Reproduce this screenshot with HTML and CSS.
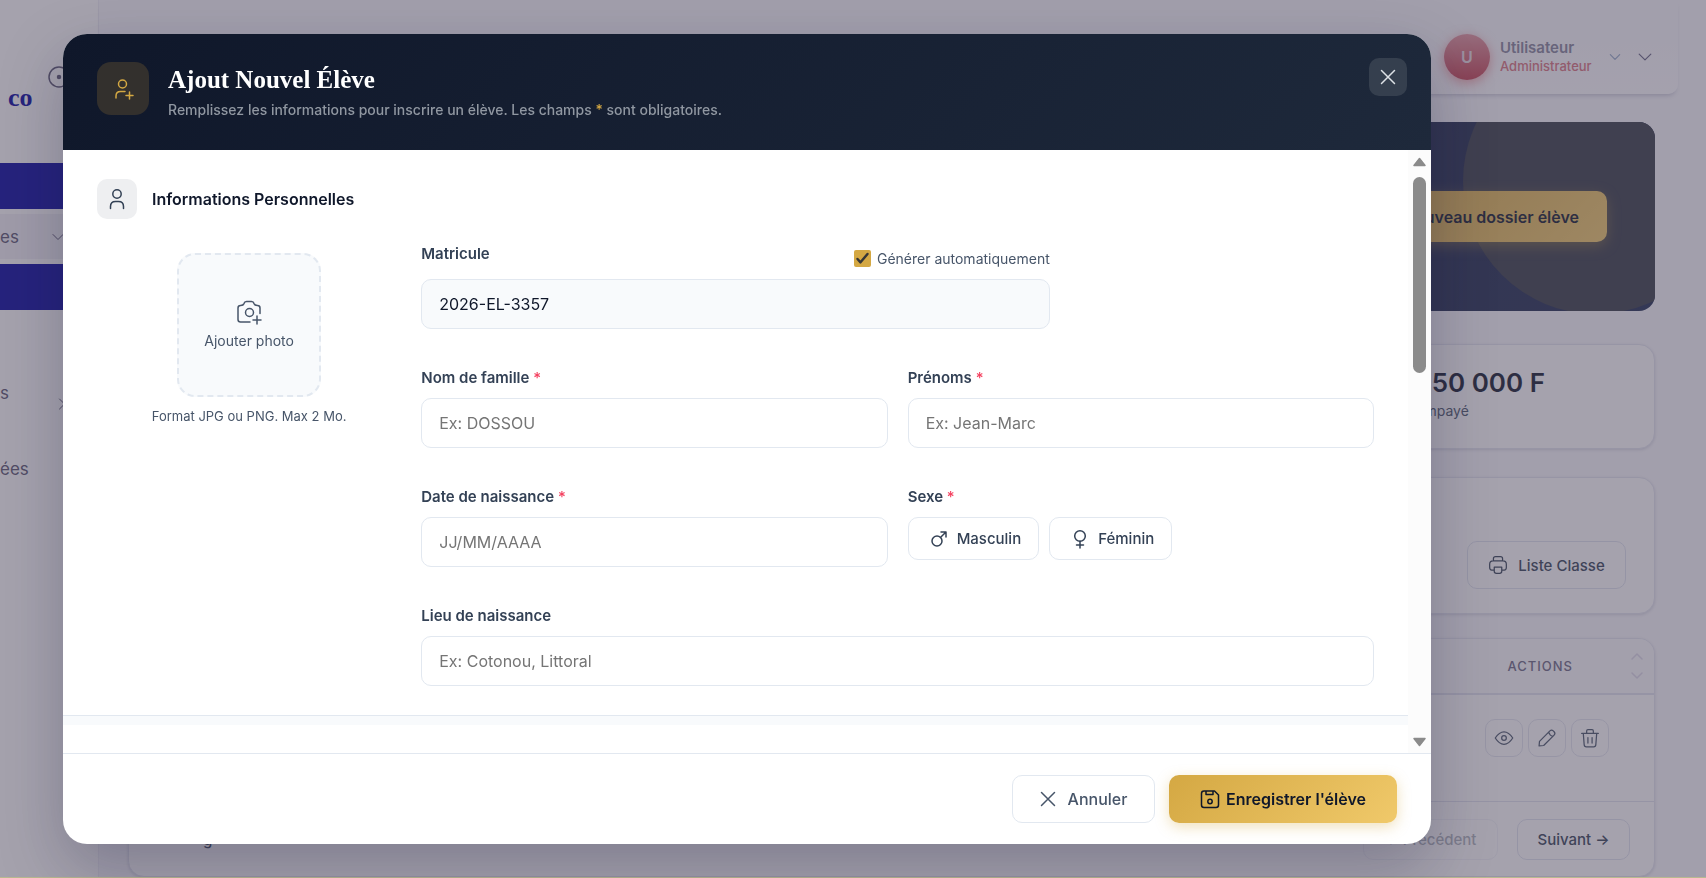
FILE: index.html
```html
<!DOCTYPE html>
<html lang="fr">
<head>
<meta charset="utf-8">
<title>Ajout Nouvel Élève</title>
<link rel="stylesheet" href="styles.css">
</head>
<body>
<div class="app">
  <nav class="sidebar">
    <div class="brand"><span class="brand-name">co</span>
      <svg class="pin" viewBox="0 0 24 24"><circle cx="12" cy="12" r="10"/><circle cx="12" cy="12" r="1.5" class="dot"/></svg>
    </div>
    <div class="nav-bar"></div>
    <div class="nav-item open"><span>es</span><svg class="ico12" viewBox="0 0 12 12"><path d="M1 3.500l5 5 5-5"/></svg></div>
    <div class="nav-bar"></div>
    <div class="nav-group"><span>s</span><svg class="ico12" viewBox="0 0 12 12"><path d="M3.500 1l5 5-5 5"/></svg></div>
    <div class="nav-group"><span>ées</span></div>
  </nav>
  <main class="main">
    <header class="topbar">
      <div class="avatar">U</div>
      <div class="user"><strong>Utilisateur</strong><span>Administrateur</span></div>
      <svg class="chev small" viewBox="0 0 12 12"><path d="M2 4l4 4 4-4"/></svg>
      <svg class="chev" viewBox="0 0 12 12"><path d="M1 3.500l5 5 5-5"/></svg>
    </header>
    <div class="content">
      <section class="banner"><button class="gold" type="button">Nouveau dossier élève</button></section>
      <section class="card stat"><div class="stat-text"><strong>150 000 F</strong><span>Impayé</span></div></section>
      <section class="card tools">
        <button class="outline" type="button">
          <svg class="ico20" viewBox="0 0 24 24"><path d="M6.500 7V4.500Q6.500 2 9 2h6q2.500 0 2.500 2.500V7M6.500 18H4.500Q2 18 2 15v-4q0-4 4-4h12q4 0 4 4v4q0 3-2.500 3h-2M7.500 14.500h9v5Q16.500 22 14 22h-4q-2.500 0-2.500-2.500z"/></svg>Liste Classe</button>
      </section>
      <section class="card table">
        <div class="thead"><span>ACTIONS</span>
          <svg class="sort" viewBox="0 0 14 30"><path d="M2 8l5-5 5 5M2 22l5 5 5-5"/></svg></div>
        <div class="trow">
          <button type="button" aria-label="Voir"><svg class="ico20" viewBox="0 0 24 24"><path d="M1.500 12C5 6.500 8.500 4.500 12 4.500s7 2 10.500 7.500c-3.500 5.500-7 7.500-10.500 7.500S5 17.500 1.500 12z"/><circle cx="12" cy="12" r="2.800"/></svg></button>
          <button type="button" aria-label="Modifier"><svg class="ico20" viewBox="0 0 24 24"><path d="M3 16L15.500 3.500q2-2 4 0l1 1q2 2 0 4L8 21l-5.500.5zM14 5q1.500 4.500 5 5"/></svg></button>
          <button type="button" aria-label="Supprimer"><svg class="ico20" viewBox="0 0 24 24"><path d="M2 6.500h20M8 6V3.500Q8 2 9.500 2h5Q16 2 16 3.500V6M4 7l1 13q.2 2.500 2.500 2.500h9q2.300 0 2.500-2.500l1-13M9.500 11.500v6.500M14.500 11.500v6.500"/></svg></button>
        </div>
        <div class="pager"><span class="page-info">g</span>
          <button class="prev" type="button" disabled>← Précédent</button>
          <button type="button">Suivant →</button></div>
      </section>
    </div>
  </main>
</div>

<div class="overlay">
  <form class="dialog" role="dialog" aria-labelledby="dlg-title">
    <header class="dlg-head">
      <div class="head-icon"><svg class="ico24" viewBox="0 0 24 24"><circle cx="11.500" cy="7" r="4"/><path d="M5 21v-2q0-4.500 4.500-4.500h4.500M15 18.500h7M18.500 15v7"/></svg></div>
      <div class="head-text">
        <h1 id="dlg-title">Ajout Nouvel Élève</h1>
        <p>Remplissez les informations pour inscrire un élève. Les champs <b>*</b> sont obligatoires.</p>
      </div>
      <button class="close" type="button" aria-label="Fermer"><svg class="ico16" viewBox="0 0 16 16"><path d="M1.500 1.500l13 13M14.500 1.500l-13 13"/></svg></button>
    </header>
    <div class="dlg-body">
      <div class="scroll">
        <section class="section">
          <div class="section-title">
            <span class="section-icon"><svg class="ico24" viewBox="0 0 24 24"><circle cx="12" cy="7" r="4.200"/><path d="M5.500 21.500v-2q0-5 5-5h3q5 0 5 5v2"/></svg></span>
            <h2>Informations Personnelles</h2>
          </div>
          <div class="columns">
            <div class="photo">
              <button class="photo-box" type="button">
                <svg class="ico28" viewBox="0 0 28 28"><path d="M15 24H5.500Q3 24 3 21.500V10Q3 7.500 5.500 7.500C8 7.500 8.500 7 9 5.500Q9.500 3.500 11.500 3.500h5q2 0 2.500 2c.5 1.500 1 2 3.500 2Q25 7.500 25 10v5.500M22 18v8M18 22h8"/><circle cx="14.500" cy="14.500" r="4"/></svg>
                Ajouter photo</button>
              <small>Format JPG ou PNG. Max 2 Mo.</small>
            </div>
            <div class="fields">
              <div class="field wide">
                <div class="label-row"><label for="mat">Matricule</label>
                  <label class="auto"><input type="checkbox" checked><span class="tick"><svg viewBox="0 0 17 17"><path d="M3.500 9l3 3.300 7-8.300"/></svg></span>Générer automatiquement</label></div>
                <input id="mat" type="text" value="2026-EL-3357" readonly>
              </div>
              <div class="field half"><label for="nom">Nom de famille <b>*</b></label><input id="nom" type="text" placeholder="Ex: DOSSOU"></div>
              <div class="field half"><label for="pre">Prénoms <b>*</b></label><input id="pre" type="text" placeholder="Ex: Jean-Marc"></div>
              <div class="field half"><label for="dob">Date de naissance <b>*</b></label><input id="dob" type="text" placeholder="JJ/MM/AAAA"></div>
              <div class="field half"><span class="label" id="sexe">Sexe <b>*</b></span>
                <div class="choices" role="group" aria-labelledby="sexe">
                  <button type="button"><svg class="ico20" viewBox="0 0 20 20"><circle cx="8" cy="12" r="5"/><path d="M11.700 8.300L17 3M12 3h5v5"/></svg>Masculin</button>
                  <button type="button"><svg class="ico20" viewBox="0 0 20 20"><circle cx="10" cy="7" r="5.300"/><path d="M10 12.300V19M6.500 16h7"/></svg>Féminin</button>
                </div></div>
              <div class="field full"><label for="lieu">Lieu de naissance</label><input id="lieu" type="text" placeholder="Ex: Cotonou, Littoral"></div>
            </div>
          </div>
        </section>
        <div class="band"></div>
      </div>
      <div class="scrollbar" aria-hidden="true">
        <svg viewBox="0 0 15 11"><path d="M7.500 2L13 9H2z"/></svg>
        <div class="track"><div class="thumb"></div></div>
        <svg viewBox="0 0 15 11"><path d="M7.500 9L2 2h11z"/></svg>
      </div>
    </div>
    <footer class="dlg-foot">
      <button class="cancel" type="button"><svg class="ico16" viewBox="0 0 16 16"><path d="M1.500 1.500l13 13M14.500 1.500l-13 13"/></svg>Annuler</button>
      <button class="gold save" type="submit"><svg class="ico20" viewBox="0 0 20 20"><path d="M4 2h10.500L18.500 6v10q0 2.500-2.500 2.500H4Q1.500 18.500 1.500 16V4.500Q1.500 2 4 2zM6 2v3.500h7V2"/><circle cx="10" cy="12.500" r="2.200"/></svg>Enregistrer l'élève</button>
    </footer>
  </form>
</div>
</body>
</html>
```
FILE: styles.css
```css
* { box-sizing: border-box; }
body, h1, h2, p { margin: 0; }
body { font-family: Inter, "Open Sans", sans-serif; color: #0f172a; }
button, input { font: inherit; color: inherit; }
button { display: flex; align-items: center; justify-content: center; padding: 0; border: 0; background: none; white-space: nowrap; }
svg { flex: none; fill: none; stroke: currentColor; stroke-width: 1.5; stroke-linecap: round; stroke-linejoin: round; }
.ico12 { width: 12px; height: 12px; stroke-width: 1; }
.ico16 { width: 16px; height: 16px; }
.ico20 { width: 20px; height: 20px; }
.ico24 { width: 24px; height: 24px; }
.ico28 { width: 28px; height: 28px; }

/* Page behind the dialog */
.app { display: flex; height: 100vh; overflow: hidden; background: #f8f8fc; }
.sidebar { flex: none; width: 99px; padding-top: 64px; background: #fff; color: #57536f; font-size: 17px; border-right: 1px solid #efeff6; }
.brand { display: flex; justify-content: space-between; height: 99px; padding: 0 27px 0 8px; color: #00009e; }
.brand-name { padding-top: 20px; font: bold 26px/28px "Liberation Serif", serif; }
.pin { width: 24px; height: 26px; color: #57536f; }
.pin .dot { fill: currentColor; }
.nav-bar { height: 46px; background: #00009e; }
.nav-item, .nav-group { display: flex; align-items: center; justify-content: space-between; padding-right: 34px; }
.nav-item { height: 45px; margin: 5px 0; background: #f2f1f6; }
.nav-group { height: 77px; margin-bottom: -1px; padding-right: 30px; }
.nav-group svg { margin-top: 22px; }
.nav-bar + .nav-group { margin-top: 44px; }
.main { flex: 1; min-width: 0; }
.topbar { display: flex; align-items: center; justify-content: flex-end; height: 94px; margin-right: 28px; padding: 19px 26px 0 0; border-radius: 0 0 10px 10px; background: linear-gradient(#f8f8fc 30%, #fdfcff); box-shadow: 0 4px 5px -3px rgba(20, 20, 70, .25); color: #9694a8; }
.avatar { display: grid; place-items: center; width: 46px; height: 46px; margin-right: 10px; border-radius: 50%; background: linear-gradient(#e2949f, #c63f50); box-shadow: 0 3px 12px rgba(230, 70, 80, .5); color: #e8dbe2; font-weight: 600; }
.user { display: grid; width: 96px; font-size: 15px; line-height: 18px; color: #84839a; }
.user strong { font-weight: 600; }
.user span { font-size: 13px; font-weight: 500; color: #d9707c; }
.chev { width: 14px; height: 14px; stroke-width: 1; margin-left: 16px; color: #626080; }
.chev.small { margin-left: 12px; color: #93a8c8; }
.content { display: grid; gap: 28px; padding: 28px 51px 0 29px; }
.banner { position: relative; overflow: hidden; display: flex; align-items: center; justify-content: flex-end; height: 189px; padding-right: 48px; border-radius: 16px; background: linear-gradient(135deg, #0f172a, #1d2a50); margin-bottom: 5px; }
.banner::before { content: ""; position: absolute; top: -74px; right: -74px; width: 266px; height: 266px; border-radius: 50%; background: #343a45; }
.gold { height: 48px; padding: 0 28px; border-radius: 10px; background: linear-gradient(135deg, #d4a843, #f0c96a); box-shadow: 0 4px 14px rgba(212, 168, 67, .35); font-size: 16px; font-weight: 600; }
.banner .gold { position: relative; height: 51px; }
.card { border: 1px solid #e3e5ef; border-radius: 16px; background: #fff; box-shadow: 0 1px 3px rgba(15, 23, 72, .14); }
.stat { display: flex; justify-content: flex-end; height: 105px; padding: 21px 109px 0 0; }
.stat-text { display: grid; align-content: start; color: #475569; font-size: 14px; line-height: 22px; }
.stat strong { color: #0f172a; font-size: 26px; line-height: 34px; font-weight: 600; }
.tools { display: flex; align-items: flex-end; justify-content: flex-end; height: 137px; padding: 0 28px 24px; }
.outline { gap: 10px; width: 159px; height: 48px; border: 1px solid #dfe3ee; border-radius: 10px; color: #334155; font-size: 15px; font-weight: 500; }
.table { overflow: hidden; margin-top: -4px; }
.thead { display: flex; align-items: center; justify-content: flex-end; gap: 57px; height: 56px; padding-right: 10px; background: #fafafd; border-bottom: 2px solid #e0e2ee; color: #6a6682; font-size: 13px; font-weight: 500; letter-spacing: 1px; }
.sort { width: 14px; height: 30px; color: #ddd9e8; }
.trow { display: flex; justify-content: flex-end; gap: 5px; height: 107px; padding: 24px 45px 0; border-bottom: 1px solid #e0e2ee; color: #475569; }
.trow button { width: 38px; height: 38px; border: 1px solid #e3e5ef; border-radius: 10px; }
.pager { display: flex; align-items: center; gap: 19px; height: 74px; padding: 0 24px 0 74px; color: #334155; font-size: 15px; font-weight: 500; }
.page-info { margin-right: auto; }
.pager button { width: 113px; height: 41px; border: 1px solid #dfe3ee; border-radius: 10px; }
.pager .prev { width: 135px; opacity: .4; }

/* Dialog */
.overlay { position: fixed; inset: 0; padding: 34px 275px 33px 63px; background: rgba(75, 70, 91, .5); border-bottom: 1px solid #b9b98f; }
.dialog { display: flex; flex-direction: column; height: 100%; overflow: hidden; border-radius: 24px; background: #fff; box-shadow: 0 24px 64px rgba(15, 15, 50, .25); }
.dlg-head { display: flex; padding: 28px 24px 27px 34px; background: linear-gradient(135deg, #0f172a, #1e293b); color: #fff; }
.head-icon { display: grid; place-items: center; width: 52px; height: 53px; border-radius: 14px; background: #33302d; color: #d4a843; }
.head-text { flex: 1; padding-left: 19px; }
.head-text h1 { font: bold 25px/35px "Liberation Serif", serif; }
.head-text p { font-size: 14px; line-height: 26px; font-weight: 500; color: #9097a1; }
.head-text b { color: #d4a843; font-weight: 500; }
.close { width: 38px; height: 38px; margin-top: -4px; border-radius: 10px; background: #353f4e; color: #dde1e6; }
.dlg-body { display: flex; flex: 1; min-height: 0; }
.scroll { flex: 1; overflow: hidden; }
.section { padding: 29px 34px; border-bottom: 1px solid #e2e8f0; }
.section-title { display: flex; align-items: center; gap: 15px; margin-bottom: 24px; }
.section-title h2 { font-size: 16px; font-weight: 600; }
.section-icon { display: grid; place-items: center; width: 40px; height: 40px; border-radius: 10px; background: #eeeff1; color: #334155; }
.columns { display: grid; grid-template-columns: repeat(4, 1fr); gap: 20px; }
.photo { display: flex; flex-direction: column; align-items: center; gap: 9px; padding-top: 10px; color: #475569; }
.photo-box { flex-direction: column; gap: 6px; width: 144px; height: 144px; padding-bottom: 4px; border: 2px dashed #e2e8f0; border-radius: 18px; background: #f8fafc; font-size: 14px; }
.photo small { font-size: 13px; line-height: 20px; }
.fields { grid-column: span 3; display: grid; grid-template-columns: repeat(6, 1fr); gap: 38px 20px; }
.field { display: flex; flex-direction: column; gap: 10px; }
.wide { grid-column: span 4; }
.half { grid-column: span 3; }
.full { grid-column: span 6; }
.field label, .label { font-size: 15px; line-height: 21px; font-weight: 600; color: #334155; }
.field b { color: #f43f5e; font-weight: 500; }
.label-row { display: flex; justify-content: space-between; height: 26px; }
.field .auto { display: flex; align-items: center; gap: 6px; padding-top: 5px; font-size: 14px; font-weight: 400; color: #475569; }
.auto input { position: absolute; opacity: 0; }
.tick { display: block; width: 17px; height: 17px; border-radius: 2px; background: #d4a843; }
.tick svg { display: block; stroke: #363636; stroke-width: 2.5; }
.field input[type="text"] { width: 100%; height: 50px; padding: 0 17px; border: 1px solid #e2e8f0; border-radius: 10px; background: #fff; font-size: 16px; outline: 0; }
.field input[readonly] { background: #f8fafc; }
.field input::placeholder { color: #757575; opacity: 1; }
.choices { display: flex; gap: 10px; }
.choices button { gap: 8px; height: 43px; padding: 0 17px 0 20px; border: 1px solid #e2e8f0; border-radius: 10px; font-size: 15px; font-weight: 500; color: #334155; }
.band { height: 9px; background: #f8fafc; }
.scrollbar { display: flex; flex-direction: column; align-items: center; width: 23px; padding: 6px 0 5px; background: #fcfcfc; }
.scrollbar svg { width: 15px; height: 12px; fill: #8b8b8b; stroke: #8b8b8b; }
.track { flex: 1; padding: 9px 0; }
.thumb { width: 13px; height: 196px; border-radius: 7px; background: #8b8b8b; }
.dlg-foot { display: flex; justify-content: flex-end; gap: 14px; padding: 21px 34px; border-top: 1px solid #e2e8f0; }
.cancel { gap: 12px; width: 143px; height: 48px; border: 1px solid #e2e8f0; border-radius: 10px; font-size: 16px; font-weight: 500; color: #475569; }
.save { gap: 6px; min-width: 228px; }
```
